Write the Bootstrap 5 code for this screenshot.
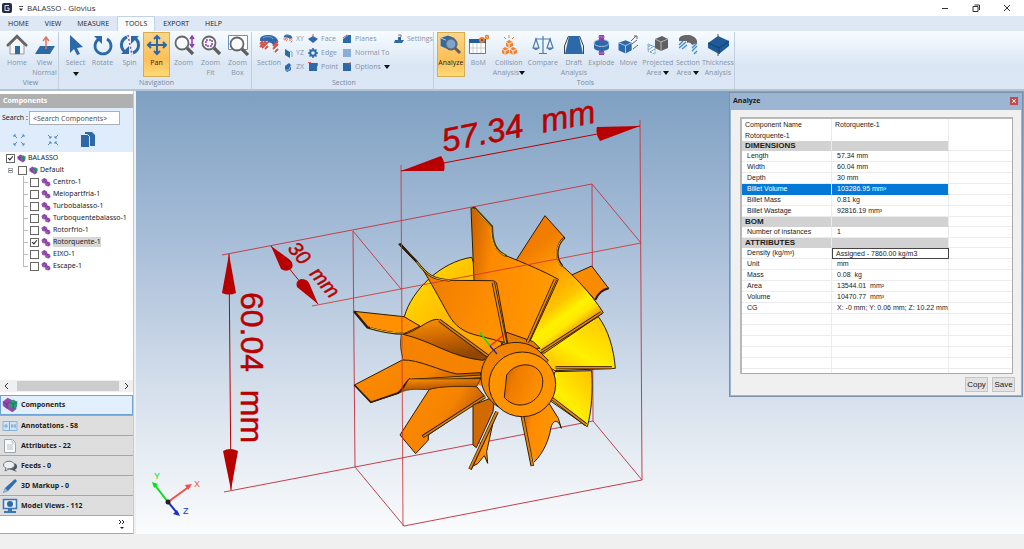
<!DOCTYPE html>
<html lang="en">
<head>
<meta charset="utf-8">
<meta name="viewport" content="width=device-width, initial-scale=1">
<title>BALASSO - Glovius</title>
<link href="https://cdn.jsdelivr.net/npm/bootstrap@5.3.0/dist/css/bootstrap.min.css" rel="stylesheet">
<style>
:root{--ui:"Open Sans","Noto Sans",sans-serif;--blue:#2d69a9;--ink:#1b1b1b}
body{font:7px/10px var(--ui);color:var(--ink);background:#f0f0f0;min-height:100vh}
button,input{font:inherit;color:inherit}
svg{display:block;flex:none}
.titlebar{height:16px;background:#fff;font-size:8px;color:#333;padding-left:2px}
.winctl button,.plain{border:0;background:none;padding:0}
.winctl{gap:21px;padding-right:12px}
.tabs{height:15px;background:#dde8f4}
.tabs a{color:#262626;text-decoration:none;line-height:15px;height:15px;padding:0 8px}
.tabs a.on{background:#f8fcff;border:1px solid #c3d3e6;border-bottom:0;line-height:14px;padding:0 7px}
.ribbon{height:60px;background:linear-gradient(#f7fcff,#dae6f4 60%,#dbe7f5);border-bottom:2px solid #b5c4d4;padding-top:1px}
.grp{border-right:1px solid #c2cfde;padding:0 0 0 3px;height:57px}
.grp-name{color:#76879c;height:11px;line-height:11px;text-align:center}
.tool{border:1px solid transparent;background:none;padding:1px 0 0;width:27px;height:45px;color:#8593a6;display:flex;flex-direction:column;align-items:center;white-space:nowrap}
.tool svg{margin-bottom:2px}
.tool.on{background:linear-gradient(#fbd58b,#fdc055 60%,#ffd878);border-color:#d9ac4e;color:#2a241a}
.w28{width:28px}.w32{width:32px}.w34{width:34px}
.mini{height:14px;color:#8593a6;gap:3px;white-space:nowrap}
.caret{display:inline-block;border:3px solid transparent;border-top:4px solid #111;border-bottom:0}
.side{width:134px;background:#fff;border-right:1px solid #c3c9d0;margin-right:2px;font-family:"Noto Sans",sans-serif}
.side-head{background:#b0b0b0;color:#fff;font-weight:700;height:14px;line-height:14px;padding-left:3px;margin-top:3px}
.side-search{background:#dfecfb;height:44px;padding:3px 2px 0}
.side-search label{width:27px}
.side-search input{width:91px;height:14px;border:1px solid #a9b0b8;background:#fff;padding:0 3px}
.side-search input::placeholder{color:#555;opacity:1}
.exp{padding:6px 35px 0 10px}
.node{height:12px;gap:2px;white-space:nowrap}
.tree input{appearance:none;width:9px;height:9px;border:1px solid #666;background:#fff;margin:0;flex:none}
.tree input:checked::after{content:"";display:block;width:3px;height:5px;border:solid #222;border-width:0 1px 1px 0;transform:rotate(40deg);margin:0 auto}
.lv0{padding-left:6px}.lv1{padding-left:8px}.lv2{padding-left:23px}
.kids{background:linear-gradient(#bbb,#bbb) 23px 0/1px 91px no-repeat}
.kids .node::before{content:"";width:5px;border-top:1px solid #bbb}
.picked{background:#d8d8d8}
.toggle{width:5px;height:5px;border:1px solid #aaa;background:#fff;padding:0;margin-right:3px}
.toggle::after{content:"";display:block;border-top:1px solid #4472b0;margin-top:1px}
.hbar{height:12px;background:#f0f0f0;margin-bottom:3px}
.hbar .thumb{background:#cdcdcd;flex:1;height:10px;margin:0 5px 0 8px}
.pane-tab{border:0;border-top:1px solid #a6a6a6;background:#dedede;height:20px;font-weight:700;text-align:left;padding:0 2px;gap:3px;width:100%}
.pane-tab.on{background:#e2effc;border:1px solid #6ea3d6;padding:0 1px}
.more{height:19px;border-top:1px solid #a6a6a6;border-bottom:1px solid #a6a6a6;padding-right:7px}
.view{background:linear-gradient(#7fa0c2,#a5bcd7 32%,#d3deeb 66%,#fbfcfd)}
.view>svg{width:100%;height:100%}
.dims{font-family:"Liberation Sans",sans-serif;fill:#b80000;stroke:#b80000}
.analyze{position:absolute;top:1px;right:1px;width:294px;height:305px;background:#f0f0f0;border:2px solid #9bb5d2;border-top:0;outline:1px solid #7d93ab;outline-offset:-1px;font-family:"Liberation Sans",sans-serif}
.an-head{background:#9bb5d2;height:18px;font:700 7px/18px var(--ui);padding:0 3px 0 2px}
.close-x{width:8px;height:8px;background:#c9484b;border:0;padding:0;display:flex;align-items:center;justify-content:center}
.sheet{margin:7px 8px 3px 9px;height:257px;background:#fff;border:1px solid #a9a9a9;border-left:2px solid #b8b8b8;border-top:2px solid #b8b8b8;overflow:hidden}
.grid{width:100%;border-collapse:separate;border-spacing:0;table-layout:fixed}
.grid td,.grid th{height:11px;line-height:10px;padding:0 0 0 5px;border-right:1px solid #ececec;border-bottom:1px solid #ececec;white-space:nowrap;font-weight:400;overflow:hidden}
.grid td:last-child{border-right:0}
.grid .top th,.grid .top td{border-bottom:0;padding-left:3px}
.grid .cat th,.grid .cat td{height:10px;line-height:9px}
.grid .cat th{font-size:8px;font-weight:700;padding-left:3px}
.grid .cat :not(:last-child){background:#d2d2d2;border-bottom-color:#d2d2d2}
.grid .hit :not(:last-child){background:#0478d7;color:#fff;border-bottom-color:#0478d7}
.grid td.edit{border:1px solid #444;padding-left:3px;line-height:9px}
.actions{gap:4px;padding-right:6px}
.act{height:15px;min-width:23px;border:1px solid #c4c4c4;background:#e2e2e2;padding:0 1px;font-size:8px}
.status{height:15px;background:#f0f0f0}
</style>
</head>
<body class="d-flex flex-column overflow-hidden">
<svg width="0" height="0" class="position-absolute" aria-hidden="true">
 <defs>
  <symbol id="part" viewBox="0 0 20 20"><path d="M1 6 6 2l5 2 2 5 5 2 1 5-4 3-6-2-1-4-5-1Z" fill="#8a3fa5"/><path d="m1 6 5 2 5-3M6 8v5m2 0 5-3m-5 3 5 2 5-3m-5 3v4" stroke="#b67bcb" fill="none"/></symbol>
  <symbol id="asm" viewBox="0 0 20 20"><path d="M1 6 7 1l6 3 5 5v6l-5 4-8-5-4-3Z" fill="#9549ac"/><path d="m1 6 5 3 6-4M6 9v5" stroke="#6c2a85" fill="none"/><path d="m9 6 5-3 5 3v6l-5 3-5-3Z" fill="#2b9b75"/><path d="m9 6 5 3 5-3m-5 3v6" stroke="#156b50" fill="none"/></symbol>
  <symbol id="ring" viewBox="0 0 22 22"><path d="M2 5C3 0 18-1 20 7v13l-5-3v-6c-1-2-3-3-5-2v5l-8-2Z" fill="#2d69a9"/><path d="M2 7h8v9l-8-2Zm13 4 5-2v11l-5-3Z" fill="#fff"/><path d="m2 10 3-3m-3 6 6-6m-4 7 6-6m-3 7 3-3m5 0 5-5m-5 8 5-5m-3 8 3-3" stroke="#d64b43" stroke-width="1.800"/><path d="M5 4c3-2 9-2 10 1" stroke="#7ea8d2" fill="none"/></symbol>
  <symbol id="mag" viewBox="0 0 22 22"><circle cx="9" cy="9" r="6.500" fill="#fff" fill-opacity=".6" stroke="#666" stroke-width="1.800"/><path d="m14 14 6 6" stroke="#5f5f5f" stroke-width="3.200"/></symbol>
  <symbol id="cube" viewBox="0 0 22 22"><path d="m2 6 9-3 8 3v10l-8 4-9-4Z" fill="#2d69a9"/><path d="m2 6 9 4 8-4m-8 4v10" stroke="#d5e4f4" fill="none"/></symbol>
  <linearGradient id="gA" x1="0" y1="0" x2="1" y2="1"><stop stop-color="#ffe600"/><stop offset=".6" stop-color="#ffb200"/><stop offset="1" stop-color="#ff8c00"/></linearGradient>
  <linearGradient id="gB" x1="0" y1="0" x2="1" y2=".4"><stop stop-color="#c86200"/><stop offset=".35" stop-color="#ef7c00"/><stop offset="1" stop-color="#ff9000"/></linearGradient>
  <linearGradient id="gC" x1="0" y1="0" x2="1" y2=".2"><stop stop-color="#c65f00"/><stop offset=".3" stop-color="#ff8a00"/><stop offset="1" stop-color="#ff9a00"/></linearGradient>
  <linearGradient id="gD" gradientUnits="userSpaceOnUse" x1="560" y1="180" x2="740" y2="420"><stop stop-color="#f07c00"/><stop offset=".3" stop-color="#ff9800"/><stop offset=".62" stop-color="#ffc400"/><stop offset=".75" stop-color="#fff200"/><stop offset=".84" stop-color="#ffe800"/><stop offset="1" stop-color="#e87600"/></linearGradient>
  <linearGradient id="gE" x1="0" y1="1" x2="1" y2="0"><stop stop-color="#ffac00"/><stop offset=".45" stop-color="#fff000"/><stop offset="1" stop-color="#ffc000"/></linearGradient>
  <linearGradient id="gF" x1="0" y1="0" x2=".3" y2="1"><stop stop-color="#ff9600"/><stop offset=".55" stop-color="#c96500"/><stop offset="1" stop-color="#8e4600"/></linearGradient>
  <linearGradient id="gG" x1="0" y1="0" x2="1" y2=".5"><stop stop-color="#ff8e00"/><stop offset=".6" stop-color="#f58300"/><stop offset="1" stop-color="#a85000"/></linearGradient>
 </defs>
</svg>

<header class="titlebar d-flex align-items-center justify-content-between">
 <div class="d-flex align-items-center">
  <svg width="25" height="14" viewBox="0 0 25 14"><rect y="2" width="10" height="10" rx="2" fill="#242b45"/><path d="M7 4.500H3v5h4V7H5" stroke="#dfe4f2" fill="none"/><path d="M17 5.500h4" stroke="#555"/><path d="m17 7.500 2 2.500 2-2.500Z" fill="#333"/></svg>
  <span>BALASSO - Glovius</span>
 </div>
 <div class="winctl d-flex">
  <button aria-label="Minimize"><svg width="10" height="10"><path d="M2 5.500h6" stroke="#333"/></svg></button>
  <button aria-label="Restore"><svg width="10" height="10"><path d="M2 3.500h5v5H2Zm1.500-1.500h5v5" stroke="#333" fill="none"/></svg></button>
  <button aria-label="Close"><svg width="10" height="10"><path d="m2 2 6 6m0-6-6 6" stroke="#333"/></svg></button>
 </div>
</header>

<nav class="tabs d-flex" aria-label="Ribbon tabs">
 <a href="#">HOME</a><a href="#">VIEW</a><a href="#">MEASURE</a><a href="#" class="on">TOOLS</a><a href="#">EXPORT</a><a href="#">HELP</a>
</nav>

<div class="ribbon d-flex">
 <section class="grp">
  <div class="d-flex">
   <button class="tool w28"><svg width="22" height="22"><path d="M4 11v9h14v-9l-7-7Z" fill="#f4f6f8" stroke="#999"/><path d="m1 12 10-10 10 10" stroke="#666" stroke-width="2.500" fill="none"/><path d="M9 12h5v8H9Z" fill="#2d69a9"/></svg>Home</button>
   <button class="tool"><svg width="22" height="22"><path d="M6 12h15l-5 8H1Z" fill="#2d69a9"/><path d="M12 15V4m-3 3 3-4 3 4" stroke="#df7466" fill="none" stroke-width="1.500"/></svg>View<br>Normal</button>
  </div>
  <div class="grp-name">View</div>
 </section>
 <section class="grp">
  <div class="d-flex">
   <button class="tool"><svg width="22" height="22"><path d="M5 1v18l4-4 3 6 3-1-3-6 6-1Z" fill="#2d69a9"/></svg>Select<i class="caret mt-1"></i></button>
   <button class="tool"><svg width="22" height="22"><path d="M15 5a8 8 0 1 1-8 0" stroke="#2d69a9" stroke-width="2.800" fill="none"/><path d="M2 2h8v8Z" fill="#2d69a9"/></svg>Rotate</button>
   <button class="tool"><svg width="22" height="22"><path d="M8 3c-7 3-7 11-2 15m8 1c7-3 7-11 2-15" stroke="#2d69a9" stroke-width="3" fill="none"/><path d="M2 20h8v-8Zm18-18h-8v8Z" fill="#2d69a9"/><path d="m9 1 4 20" stroke="#9349ad" stroke-width="1.500" stroke-dasharray="2 2"/></svg>Spin</button>
   <button class="tool on"><svg width="22" height="22"><path d="M11 3v16M3 11h16M8 5l3-3 3 3M8 17l3 3 3-3M5 8l-3 3 3 3M17 8l3 3-3 3" stroke="#2d69a9" stroke-width="2" fill="none"/></svg>Pan</button>
   <button class="tool"><svg width="22" height="22"><use href="#mag"/><path d="M19 3v9m-2-7 2-3 2 3m-4 5 2 3 2-3" stroke="#8b3faa" fill="none" stroke-width="1.500"/></svg>Zoom</button>
   <button class="tool"><svg width="22" height="22"><use href="#mag"/><path d="M6 6h6v6H6Z" fill="none" stroke="#8b3faa" stroke-width="1.500" stroke-dasharray="2 1"/></svg>Zoom<br>Fit</button>
   <button class="tool"><svg width="22" height="22"><path d="M1.500 1.500h19v14h-19Z" fill="#fff" stroke="#6792bf"/><use href="#mag" x="1" y="1"/></svg>Zoom<br>Box</button>
  </div>
  <div class="grp-name">Navigation</div>
 </section>
 <section class="grp">
  <div class="d-flex">
   <button class="tool w28"><svg width="22" height="22"><use href="#ring"/></svg>Section</button>
   <div class="d-flex gap-1">
    <div class="d-flex flex-column">
     <button class="plain mini d-flex align-items-center"><svg width="10" height="10"><use href="#ring" width="10" height="10"/></svg>XY</button>
     <button class="plain mini d-flex align-items-center"><svg width="10" height="10"><path d="m2 1 5 3v6L2 7Z" fill="#2d69a9"/><path d="m7 3 2 1v5" stroke="#7ea8d2" fill="none"/></svg>YZ</button>
     <button class="plain mini d-flex align-items-center"><svg width="10" height="10"><path d="m2 4 4-3 2 2v5L4 10 2 8Z" fill="#2d69a9"/><path d="M2 8h4l2-5" stroke="#8fb2d8" fill="none"/></svg>ZX</button>
    </div>
    <div class="d-flex flex-column">
     <button class="plain mini d-flex align-items-center"><svg width="10" height="10"><path d="m0 5 5-3 5 3-5 4Z" fill="#2d69a9"/><path d="M5 0v4" stroke="#db594d"/></svg>Face</button>
     <button class="plain mini d-flex align-items-center"><svg width="10" height="10"><circle cx="5" cy="5" r="2.800" fill="none" stroke="#2d69a9" stroke-width="2"/><path d="M5 0v2m0 6v2M0 5h2m6 0h2M1.500 1.500 3 3m4 4 1.500 1.500m0-7L7 3M3 7 1.500 8.500" stroke="#2d69a9" stroke-width="1.500"/></svg>Edge</button>
     <button class="plain mini d-flex align-items-center"><svg width="10" height="10"><path d="M1 1h8v8H1Z" fill="#2d69a9"/><path d="M0 .5h3M9.500 1v3" stroke="#db594d"/></svg>Point</button>
    </div>
    <div class="d-flex flex-column">
     <button class="plain mini d-flex align-items-center"><svg width="10" height="10"><path d="M1 5 6 1h3v8H1Z" fill="#2d69a9"/><path d="M1 4 5 1" stroke="#db594d"/></svg>Planes</button>
     <button class="plain mini d-flex align-items-center"><svg width="10" height="10"><path d="M1 1h8v8H1Z" fill="#8aaed6"/></svg>Normal To</button>
     <button class="plain mini d-flex align-items-center"><svg width="10" height="10"><path d="M1 1h8v8H1Z" fill="#2d69a9"/><path d="M8 0v3" stroke="#db594d"/></svg>Options <i class="caret"></i></button>
    </div>
    <div class="d-flex flex-column">
     <button class="plain mini d-flex align-items-center"><svg width="10" height="10"><path d="M1 6h3V3h3v3h3L8 9H0Z" fill="#2d69a9"/><path d="M4 1h3v2" stroke="#777" fill="none"/></svg>Settings</button>
    </div>
   </div>
  </div>
  <div class="grp-name">Section</div>
 </section>
 <section class="grp">
  <div class="d-flex">
   <button class="tool w28 on"><svg width="22" height="22"><use href="#cube" x="-1" y="-2" width="18" height="20"/><circle cx="11" cy="10" r="5.500" fill="#7ba5cf" stroke="#5b6470" stroke-width="2"/><path d="m15 14 5 5" stroke="#5f5f5f" stroke-width="3"/></svg>Analyze</button>
   <button class="tool"><svg width="22" height="22"><path d="M2.500 6.500h16v13h-16Z" fill="#fff" stroke="#777"/><path d="M2 5h17v4H2Z" fill="#245c9b"/><path d="M6 9v10m4-10v10m4-10v10M3 14h15" stroke="#ccc"/><circle cx="15" cy="6" r="2" fill="none" stroke="#ee7d2d" stroke-width="2"/><circle cx="20" cy="3" r="1.500" fill="none" stroke="#ee7d2d" stroke-width="1.500"/></svg>BoM</button>
   <button class="tool w34"><svg width="22" height="22"><g fill="#f08032"><path d="m8 8 3-2 4 2v4l-4 2-3-2ZM4 15l3-2 4 2v4l-4 2-3-2Zm8 0 3-2 4 2v4l-4 2-3-2Z"/></g><path d="m8 8 3 2 4-2m-4 2v4m-7 1 3 2 4-2m-4 2v4m5-6 3 2 4-2m-4 2v4" stroke="#fff" stroke-width=".8" fill="none"/><path d="M11 1v3M6 3l2 2m8-2-2 2" stroke="#f08032"/></svg><span>Collision</span><span>Analysis<i class="caret"></i></span></button>
   <button class="tool w34"><svg width="22" height="22"><path d="M11 2v17M7 19.500h8M3 5h16M4 5 1 14h6L4 5Zm14 0-3 9h6Z" stroke="#4c7db1" fill="none" stroke-width="1.200"/><path d="M1 14h6l-2 2H3Zm14 0h6l-2 2h-2Z" fill="#4c7db1"/></svg>Compare</button>
   <button class="tool w28"><svg width="22" height="22"><path d="M6 2h10l4 18H2Z" fill="#2d69a9"/><path d="M1.500 12v8m19-8v8M1.500 12l4-10m15 10-4-10" stroke="#444" fill="none"/></svg>Draft<br>Analysis</button>
   <button class="tool"><svg width="22" height="22"><path d="M4 9v5c1 4 14 4 15 0V9" fill="#2d69a9"/><ellipse cx="11.500" cy="9" rx="7.500" ry="3.500" fill="#2d69a9" stroke="#a9c5e2"/><path d="M9 1h5v7H9Zm0 16h5v4H9Z" fill="#8b3faa"/><path d="M8 3h7M8 19h7" stroke="#b97dcd"/></svg>Explode</button>
   <button class="tool"><svg width="22" height="22"><use href="#cube" y="3" width="17" height="19"/><path d="m14 7 5-5m-2 0h3v3m-5 5 5-4m-4 9 5-4" stroke="#666" fill="none"/></svg>Move</button>
   <button class="tool w32"><svg width="22" height="22"><path d="m8 5 7-3 6 3v9l-7 3-6-3Z" fill="#606060"/><path d="m8 5 6 3 7-3m-7 3v9" stroke="#b5b5b5" fill="none"/><path d="m1 10 7 3v7l-7-3Z" fill="#fff" stroke="#659bce" stroke-dasharray="2 1"/><path d="m1 13 3-2m-3 5 6-4m-4 6 5-3" stroke="#659bce"/></svg><span>Projected</span><span>Area <i class="caret"></i></span></button>
   <button class="tool w28"><svg width="22" height="22"><path d="M2 5C3 0 18-1 20 7v13l-5-3v-6c-1-2-3-3-5-2v5l-8-2Z" fill="#666"/><path d="M2 7h8v9l-8-2Zm13 4 5-2v11l-5-3Z" fill="#dcecf9"/><path d="m2 11 4-4m-4 7 7-6m-4 7 5-4m5 3 5-5m-5 8 5-5m-3 8 3-3" stroke="#4b8cc8" stroke-width="1.300"/></svg><span>Section</span><span>Area <i class="caret"></i></span></button>
   <button class="tool w32"><svg width="22" height="22"><path d="m1 9 10-7 11 5v5l-10 8-11-6Z" fill="#1f5a98"/><path d="m1 9 11 5 10-7m-10 7v6" stroke="#123f70" fill="none"/><path d="M11 0v5m0 13v4" stroke="#555"/></svg>Thickness<br>Analysis</button>
  </div>
  <div class="grp-name">Tools</div>
 </section>
</div>

<main class="d-flex flex-grow-1">
 <aside class="side d-flex flex-column flex-shrink-0">
  <div class="side-head">Components</div>
  <div class="side-search">
   <div class="d-flex align-items-center"><label for="q">Search :</label><input id="q" type="text" placeholder="&lt;Search Components&gt;"></div>
   <div class="exp d-flex justify-content-between align-items-center">
    <button class="plain" aria-label="Expand all"><svg width="14" height="14"><path d="M2 4V2h2m6 0h2v2m0 6v2h-2m-6 0H2v-2M2 2l3 3m7-3L9 5m3 7-3-3m-7 3 3-3" stroke="#4d8ac4" fill="none"/></svg></button>
    <button class="plain" aria-label="Collapse all"><svg width="14" height="14"><path d="M5 3v2H3m6-2v2h2m0 4H9v2m-4 0V9H3M2 2l3 3m7-3L9 5m3 7L9 9m-7 3 3-3" stroke="#4d8ac4" fill="none"/></svg></button>
    <button class="plain" aria-label="Copy list"><svg width="17" height="18"><path d="M6 1h7l3 3v11H6Z" fill="#2d69a9"/><path d="M1.500 3.500h7l2 2v11h-9Z" fill="#2d69a9" stroke="#dfecfb"/></svg></button>
   </div>
  </div>
  <div class="tree flex-grow-1">
   <div class="node lv0 d-flex align-items-center"><input type="checkbox" id="n0" checked><svg width="9" height="9"><use href="#asm"/></svg><label for="n0">BALASSO</label></div>
   <div class="node lv1 d-flex align-items-center"><button class="toggle" aria-label="Collapse"></button><input type="checkbox" id="n1"><svg width="9" height="9"><use href="#asm"/></svg><label for="n1">Default</label></div>
   <div class="kids">
    <div class="node lv2 d-flex align-items-center"><input type="checkbox" id="k1"><svg width="10" height="10"><use href="#part"/></svg><label for="k1">Centro-1</label></div>
    <div class="node lv2 d-flex align-items-center"><input type="checkbox" id="k2"><svg width="10" height="10"><use href="#part"/></svg><label for="k2">Meiopartfria-1</label></div>
    <div class="node lv2 d-flex align-items-center"><input type="checkbox" id="k3"><svg width="10" height="10"><use href="#part"/></svg><label for="k3">Turbobalasso-1</label></div>
    <div class="node lv2 d-flex align-items-center"><input type="checkbox" id="k4"><svg width="10" height="10"><use href="#part"/></svg><label for="k4">Turboquentebalasso-1</label></div>
    <div class="node lv2 d-flex align-items-center"><input type="checkbox" id="k5"><svg width="10" height="10"><use href="#part"/></svg><label for="k5">Rotorfrio-1</label></div>
    <div class="node lv2 d-flex align-items-center"><input type="checkbox" id="k6" checked><svg width="10" height="10"><use href="#part"/></svg><label for="k6" class="picked">Rotorquente-1</label></div>
    <div class="node lv2 d-flex align-items-center"><input type="checkbox" id="k7"><svg width="10" height="10"><use href="#part"/></svg><label for="k7">EIXO-1</label></div>
    <div class="node lv2 d-flex align-items-center"><input type="checkbox" id="k8"><svg width="10" height="10"><use href="#part"/></svg><label for="k8">Escape-1</label></div>
   </div>
  </div>
  <div class="hbar d-flex align-items-center px-1"><svg width="5" height="8"><path d="M4 1 1 4l3 3" stroke="#333" fill="none"/></svg><div class="thumb"></div><svg width="5" height="8"><path d="m1 1 3 3-3 3" stroke="#333" fill="none"/></svg></div>
  <button class="pane-tab on d-flex align-items-center"><svg width="16" height="16"><use href="#asm"/></svg>Components</button>
  <button class="pane-tab d-flex align-items-center"><svg width="16" height="16"><path d="M1 3.500h14v9H1Z" fill="#cfe5f5" stroke="#87b4d6"/><path d="M7.500 4v9M2 8h4M4 6v4m5-2h5m-4-2v4m3-4v4" stroke="#75a8cf"/></svg>Annotations - 58</button>
  <button class="pane-tab d-flex align-items-center"><svg width="16" height="16"><path d="M2.500 1.500h8l3 3v10h-11Z" fill="#f8fafb" stroke="#9aa5ae"/><path d="M10 1v4h4M5 7h6M5 9h6m-6 2h6" stroke="#b9c0c6" fill="none"/></svg>Attributes - 22</button>
  <button class="pane-tab d-flex align-items-center"><svg width="16" height="16"><ellipse cx="10.500" cy="8.500" rx="4.500" ry="3.500" fill="#4d5563"/><path d="m12 11 3 3-5-2Z" fill="#4d5563"/><ellipse cx="7" cy="7" rx="5.500" ry="3.800" fill="#eceff1" stroke="#6d7782"/><path d="m4 10-1 3 4-2" fill="#eceff1" stroke="#6d7782"/></svg>Feeds - 0</button>
  <button class="pane-tab d-flex align-items-center"><svg width="16" height="16"><path d="m1 15 2-5 10-9 2 2-9 10Z" fill="#2d6db0"/><path d="m1 15 2-5 3 3Z" fill="#8db6dd"/></svg>3D Markup - 0</button>
  <button class="pane-tab d-flex align-items-center"><svg width="16" height="16"><path d="M1.500 1.500h13v9h-13Z" fill="#e5eff8" stroke="#3a75b4" stroke-width="1.500"/><circle cx="8" cy="6" r="3" fill="#2d69a9"/><path d="M6 11h4v2h4v2H2v-2h4Z" fill="#3a75b4"/></svg>Model Views - 112</button>
  <div class="more d-flex align-items-center justify-content-end"><button class="plain" aria-label="More panes"><svg width="8" height="12"><path d="m1 1 2 2-2 2m3-4 2 2-2 2" stroke="#222" fill="none"/><path d="M2 8h4L4 10Z" fill="#222"/></svg></button></div>
 </aside>

 <section class="view position-relative flex-grow-1">
  <svg viewBox="136 91 888 443" preserveAspectRatio="xMinYMin meet" role="img" aria-label="Turbine rotor with bounding dimensions">
   <g stroke="#c2404c" fill="none">
    <path d="M222 255 592 184 641 243M353 231l2 236 49 59 238-46-49-59-238 46-131 25M592 184l1 237M353 231l48 58M640 120l2 360"/>
   </g>
   <g transform="translate(340 190) scale(.33333)" stroke="#2e1a05" stroke-width="3" stroke-linejoin="round">
    <path d="M645 545 755 542c4 60 0 120-13 168L620 625Z" fill="url(#gE)"/>
    <path d="M570 500 775 380c30 40 46 95 51 155L645 542Z" fill="url(#gE)"/>
    <path d="M695 255 755 228 806 295c-18 4-32 15-40 35Z" fill="#f98b00"/>
    <path d="M806 295c-18 4-32 15-40 35" fill="none" stroke-width="6"/>
    <path d="M193 380c22-80 110-165 202-178l30 80 60 180-40 90-255-42c-9-30-9-50-6-75Z" fill="url(#gA)"/>
    <path d="M184 440 240 408 450 505 430 590 360 560 190 510Z" fill="#f58300" stroke="none"/>
    <path d="M530 208 615 77l59 66c-25 20-30 60-7 85 30 25 85 80 123 140L612 490 540 470Z" fill="url(#gD)"/>
    <path d="M674 143c-25 20-30 60-7 85" fill="none" stroke-width="7"/><path d="M672 145c-25 20-30 60-7 83" fill="none" stroke="#eebc10"/>
    <path d="M393 55l9-3 54 58c0 45 10 75 44 88 50 20 110 45 155 70L568 458 490 430 402 270Z" fill="url(#gC)"/>
    <path d="M402 52 456 110c0 45 10 75 44 88" fill="none" stroke="#4a3900" stroke-width="7"/>
    <path d="M404 57 453 110c0 45 10 73 42 86" fill="none" stroke="#eebc10" stroke-width="3"/>
    <path d="M500 427 580 455 600 475 480 480Z" fill="#e67c00"/>
    <path d="M176 162l7-1 47 54c30 40 50 54 100 56l125 1q15 0 16 13l32 175-83-22c-50-10-75-30-95-65-25-45-55-100-80-140Z" fill="url(#gB)"/>
    <path d="M180 163 230 215c30 40 50 54 100 56" fill="none" stroke-width="7"/><path d="M230 215c30 40 50 54 100 56" fill="none" stroke="#eebc10"/>
    <path d="M460 278 497 459M646 268 562 457M784 368 604 484M816 533H647M738 704 630 621" fill="none" stroke="#2e1a05" stroke-width="10"/>
    <path d="M460 278 497 459M646 268 562 457M784 368 604 484M816 533H647M738 704 630 621" fill="none" stroke="#e38a10" stroke-width="5"/>
    <path d="M42 364 192 380 240 408 195 430c-35 0-75-8-113-18Z" fill="#ff9000"/>
    <path d="M42 364 82 412c40 12 78 20 115 19" fill="none" stroke-width="7"/><path d="M90 413c36 11 70 17 105 16" fill="none" stroke="#eebc10"/>
    <path d="M190 433C230 425 260 390 290 388q5 0 10 3L452 503l-25 8C330 500 280 455 190 433Z" fill="url(#gF)"/>
    <path d="M298 391 450 503" stroke-width="10"/><path d="M298 391 450 503" stroke="#dc850e" stroke-width="5"/>
    <path d="M43 585 187 510c50-2 110 32 165 42l70-4v18L220 572l-12-5c-10 10-20 35-35 44l-80 26Z" fill="url(#gG)"/>
    <path d="M43 585 93 637l80-28c15-8 22-32 37-43" fill="none" stroke-width="5"/>
    <path d="M215 571 423 559" stroke-width="10"/><path d="M217 571 423 559" stroke="#dc850e" stroke-width="5"/>
    <path d="M180 735 268 598c30-10 90-12 142-8l25 30L265 735v15L227 791Z" fill="url(#gG)"/>
    <path d="M207 567c-10 15-20 40-34 44 40-20 60-10 95-13 30-9 90-10 142-8l12-24Z" fill="url(#gF)" stroke-width="2"/>
    <path d="M248 740 435 620" stroke-width="10"/><path d="M250 739 435 620" stroke="#dc850e" stroke-width="5"/>
    <path d="M399 645v120l10 8 50-108 5-45Z" fill="#d36a00"/>
    <path d="M463 680 440 785l3 35-10-23-20 24-20 10 78-165Z" fill="url(#gC)"/>
    <path d="M471 665 390 838" stroke-width="11"/><path d="M471 665 390 836" stroke="#dc850e" stroke-width="6"/>
    <path d="M545 680 582 817c30-30 45-70 50-100 8-30 20-30 30-2l-7-30-30-50Z" fill="url(#gC)" stroke="none"/>
    <path d="M582 817c30-30 45-70 50-100 5-30 25-30 32-2l-9-30-28-45" fill="none"/>
    <path d="M547 678 577 828" stroke-width="11"/><path d="M547 678 577 826" stroke="#dc850e" stroke-width="6"/>
    <path d="M455 485c35-35 105-38 142-2l28 28-150 140c-60-40-70-115-20-166Z" fill="#f28300"/>
    <ellipse cx="547" cy="583" rx="100" ry="97" fill="#ff9300"/>
    <path d="M500 555c30-45 102-40 108 14 3 42-28 76-68 76-20 0-36-10-47-23Z" fill="url(#gB)"/>
   </g>
   <g stroke="#d3322e" fill="none" stroke-opacity=".85"><path d="M401 165 403 526M312 306 641 243"/></g>
   <g stroke-width="1.300"><path d="M480 332.500 490 346" stroke="#0be01a"/><path d="M505 334 490 346" stroke="#f21"/><path d="M490 346 497 354" stroke="#22c"/></g>
   <g stroke="#b80000" fill="none"><path d="M401 171 640 126M229 254 231 490M271 246 318 304"/></g>
   <g fill="#b80000">
    <path d="M401 171 441 156q5 7 3 15ZM640 126 597 127q-2 7 3 14Z"/>
    <path d="M229 254 222 293q7 3 14 0ZM231 490 223 451q7-4 15 0Z"/>
    <path d="M271 246 281 269q6 4 11-1 2-5-3-9ZM318 304 297 287q-2-6 4-8 6 0 8 4Z"/>
   </g>
   <g class="dims" stroke-width=".5">
    <text transform="translate(444 152) rotate(-11)" font-size="33" font-style="italic" stroke-width=".5">57.34&#160;&#160;mm</text>
    <text transform="translate(241 292) rotate(90)" font-size="32">60.04&#160;&#160;mm</text>
    <text transform="translate(287 249) rotate(49)" font-size="20" font-style="italic">30&#160;&#160;mm</text>
   </g>
   <g fill="none" stroke-width="2"><path d="M168 502 154 484" stroke="#0bdc1c"/><path d="M168 502 190 486" stroke="#f0514e"/><path d="M168 502 178 514" stroke="#1b30c8"/></g>
   <path d="m152 482 6 2-4 4Z" fill="#0bdc1c"/><path d="m192 484-4 6-3-5Z" fill="#f0514e"/><path d="m180 516-7-2 4-4Z" fill="#1b30c8"/><circle cx="168" cy="502" r="2.500" fill="#222"/>
   <g font-family="Liberation Sans,sans-serif" font-size="9"><text x="154" y="479" fill="#0bdc1c">Y</text><text x="194" y="487" fill="#f0514e">X</text><text x="183" y="514" fill="#1b30e8">Z</text></g>
  </svg>

  <div class="analyze d-flex flex-column">
   <div class="an-head d-flex align-items-center justify-content-between"><span>Analyze</span><button class="close-x" aria-label="Close panel"><svg width="4" height="4"><path d="m0 0 4 4M4 0 0 4" stroke="#fff"/></svg></button></div>
   <div class="sheet">
    <table class="grid">
     <colgroup><col style="width:90px"><col style="width:117px"><col></colgroup>
     <tbody>
     <tr class="top"><th>Component Name</th><td>Rotorquente-1</td><td></td></tr>
     <tr class="top"><th>Rotorquente-1</th><td></td><td></td></tr>
     <tr class="cat"><th>DIMENSIONS</th><td></td><td></td></tr>
     <tr><th>Length</th><td>57.34 mm</td><td></td></tr>
     <tr><th>Width</th><td>60.04 mm</td><td></td></tr>
     <tr><th>Depth</th><td>30 mm</td><td></td></tr>
     <tr class="hit"><th>Billet Volume</th><td>103286.95 mm³</td><td></td></tr>
     <tr><th>Billet Mass</th><td>0.81 kg</td><td></td></tr>
     <tr><th>Billet Wastage</th><td>92816.19 mm³</td><td></td></tr>
     <tr class="cat"><th>BOM</th><td></td><td></td></tr>
     <tr><th>Number of instances</th><td>1</td><td></td></tr>
     <tr class="cat"><th>ATTRIBUTES</th><td></td><td></td></tr>
     <tr><th>Density (kg/m³)</th><td class="edit">Assigned - 7860.00 kg/m3</td><td></td></tr>
     <tr><th>Unit</th><td>mm</td><td></td></tr>
     <tr><th>Mass</th><td>0.08&nbsp; kg</td><td></td></tr>
     <tr><th>Area</th><td>13544.01&nbsp; mm²</td><td></td></tr>
     <tr><th>Volume</th><td>10470.77&nbsp; mm³</td><td></td></tr>
     <tr><th>CG</th><td>X: -0 mm; Y: 0.06 mm; Z: 10.22 mm</td><td></td></tr>
     <tr><td></td><td></td><td></td></tr><tr><td></td><td></td><td></td></tr><tr><td></td><td></td><td></td></tr>
     <tr><td></td><td></td><td></td></tr><tr><td></td><td></td><td></td></tr><tr><td></td><td></td><td></td></tr>
     </tbody>
    </table>
   </div>
   <div class="actions d-flex justify-content-end"><button class="act">Copy</button><button class="act">Save</button></div>
  </div>
 </section>
</main>
<footer class="status"></footer>
<script src="https://cdn.jsdelivr.net/npm/bootstrap@5.3.0/dist/js/bootstrap.bundle.min.js"></script>
</body>
</html>
